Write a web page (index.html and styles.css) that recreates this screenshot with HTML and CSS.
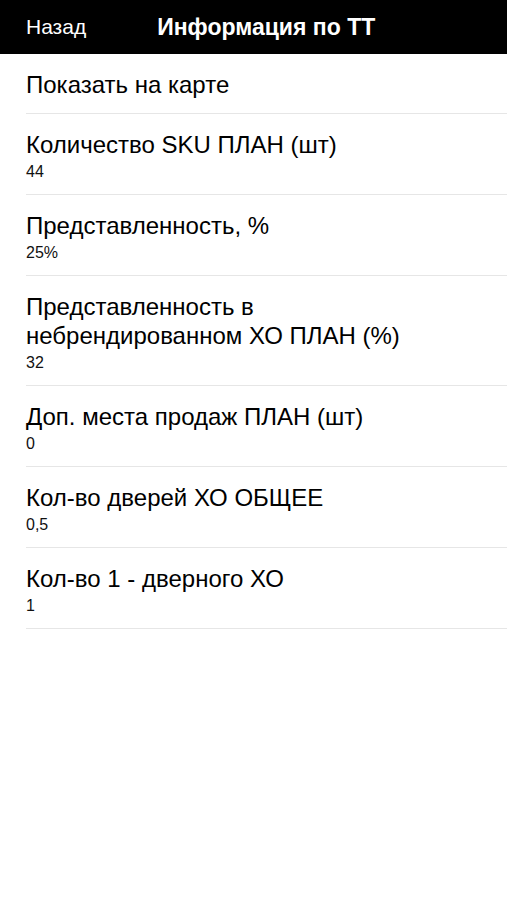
FILE: index.html
```html
<!DOCTYPE html>
<html lang="ru">
<head>
  <meta charset="UTF-8">
  <meta name="viewport" content="width=device-width, initial-scale=1">
  <title>Информация по ТТ</title>
  <link rel="stylesheet" href="styles.css">
</head>
<body>
  <header class="topbar">
    <a class="back" href="#">Назад</a>
    <h1 class="title">Информация по ТТ</h1>
  </header>

  <ul class="info-list">
    <li class="row row-link">Показать на карте</li>
    <li class="row">
      <div class="label">Количество SKU ПЛАН (шт)</div>
      <div class="value">44</div>
    </li>
    <li class="row">
      <div class="label">Представленность, %</div>
      <div class="value">25%</div>
    </li>
    <li class="row">
      <div class="label">Представленность в<br>небрендированном ХО ПЛАН (%)</div>
      <div class="value">32</div>
    </li>
    <li class="row">
      <div class="label">Доп. места продаж ПЛАН (шт)</div>
      <div class="value">0</div>
    </li>
    <li class="row">
      <div class="label">Кол-во дверей ХО ОБЩЕЕ</div>
      <div class="value">0,5</div>
    </li>
    <li class="row">
      <div class="label">Кол-во 1 - дверного ХО</div>
      <div class="value">1</div>
    </li>
  </ul>
</body>
</html>
```

FILE: styles.css
```css
* {
  margin: 0;
  padding: 0;
  box-sizing: border-box;
  font-family: "Liberation Sans", Arial, sans-serif;
}
body {
  background: #fff;
  color: #000;
  min-height: 100vh;
}

/* Top bar */
.topbar {
  display: flex;
  align-items: center;
  height: 54px;
  padding: 0 26px;
  background: #000;
  color: #fff;
}
.back {
  color: #fff;
  text-decoration: none;
  font-size: 21px;
  margin-right: 71px;
}
.title {
  font-size: 23px;
  font-weight: bold;
}

/* List */
.info-list {
  list-style: none;
}
.row {
  margin-left: 26px;
  padding: 16px 0 13px;
  border-bottom: 1px solid #e6e6e6;
}
.row-link {
  font-size: 24px;
  line-height: 28px;
  padding: 17px 0 14px;
}
.label {
  font-size: 24px;
  line-height: 29px;
}
.value {
  font-size: 16px;
  line-height: 18px;
  margin-top: 4px;
  color: #111;
}
```
